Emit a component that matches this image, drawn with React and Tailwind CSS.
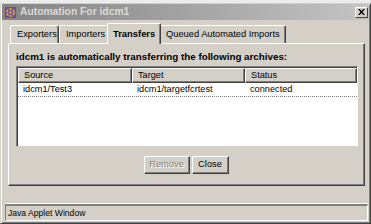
import React from "react";

const F = { fontFamily: '"Liberation Sans", Arial, sans-serif' };

function Tab({ label, active, w }) {
  if (active) {
    return (
      <div className={`relative z-10 -mx-[2px] ${w} h-[21px] -mb-[1px] pl-[5px] flex items-center bg-[#d4d0c8] border-t border-l border-white border-r border-r-[#404040] rounded-t-[2px] shadow-[inset_-1px_0_0_#808080] text-[9.4px] font-bold text-black`}>
        {label}
      </div>
    );
  }
  return (
    <div className={`${w} h-[18px] pl-[6px] pt-[1px] flex items-center bg-[#d4d0c8] border-t border-l border-white border-r border-r-[#404040] rounded-t-[2px] shadow-[inset_-1px_0_0_#808080] text-[9.3px] text-black`}>
      {label}
    </div>
  );
}

const raised =
  "border-t border-l border-white border-r border-b border-r-[#404040] border-b-[#404040] shadow-[inset_-1px_-1px_0_#808080]";

export default function App() {
  return (
    <div className="w-[371px] h-[224px] bg-white overflow-hidden" style={F}>
      <div className="h-[3px] bg-[#ececec]" />
      <div className="h-[221px] bg-[#d4d0c8] border-t border-l border-[#d4d0c8] border-r border-b border-r-[#404040] border-b-[#404040] shadow-[inset_1px_1px_0_#ffffff,inset_-1px_-1px_0_#808080] px-[1px] pb-[2px] flex flex-col">
        {/* title bar */}
        <div className="h-[16px] shrink-0 flex items-center bg-gradient-to-r from-[#848484] to-[#c4c4c4] pl-[3px] pr-[1px]">
          <svg width="11" height="11" viewBox="0 0 14 14" className="shrink-0">
            <rect x="0" y="0" width="14" height="14" fill="#6a4fa0" />
            <circle cx="7" cy="7" r="4.5" fill="none" stroke="#e8a020" strokeWidth="2.4" strokeDasharray="3.2 1.6" />
            <circle cx="7" cy="7" r="1.4" fill="#f0d060" />
          </svg>
          <span className="ml-[4px] text-[10.3px] font-bold text-[#dcdad4]">Automation For idcm1</span>
          <div className="ml-auto w-[13px] h-[11px] bg-[#d4d0c8] border-t border-l border-white border-r border-b border-r-[#404040] border-b-[#404040] flex items-center justify-center">
            <svg width="7" height="6" viewBox="0 0 7 6">
              <path d="M0 0h1.8l1.7 1.9L5.2 0H7L4.4 3 7 6H5.2L3.5 4.1 1.8 6H0l2.6-3z" fill="#000" />
            </svg>
          </div>
        </div>

        {/* tabs */}
        <div className="mt-[3px] h-[20px] shrink-0 flex items-end pl-[8px]">
          <Tab label="Exporters" w="w-[49px]" />
          <Tab label="Importers" w="w-[50px]" />
          <Tab label="Transfers" w="w-[54px]" active />
          <Tab label="Queued Automated Imports" w="w-[127px]" />
        </div>

        {/* panel */}
        <div className="ml-[6px] mr-[4px] h-[143px] shrink-0 border-t border-l border-white border-r border-b border-r-[#404040] border-b-[#404040] shadow-[inset_-1px_-1px_0_#808080] flex flex-col pl-[7px] pr-[6px] pt-[7px]">
          <div className="h-[12px] text-[9.8px] font-bold text-black leading-[12px]">
            idcm1 is automatically transferring the following archives:
          </div>
          <div className="mt-[3px] h-[81px] bg-white border-t border-l border-[#808080] border-r border-b border-r-white border-b-[#d4d0c8] shadow-[inset_1px_1px_0_#404040] pl-[1px] pt-[1px] flex flex-col">
            <div className="flex h-[15px] text-[9.2px] text-black">
              <div className={`w-[114px] bg-[#d4d0c8] ${raised} pl-[5px] flex items-center`}>Source</div>
              <div className={`w-[113px] bg-[#d4d0c8] ${raised} pl-[5px] flex items-center`}>Target</div>
              <div className={`flex-1 bg-[#d4d0c8] ${raised} pl-[5px] flex items-center`}>Status</div>
            </div>
            <div className="flex h-[13px] mt-[1px] text-[9.2px] text-black items-center border-b border-dotted border-[#808080]">
              <div className="w-[114px] pl-[5px]">idcm1/Test3</div>
              <div className="w-[113px] pl-[5px]">idcm1/targetfcrtest</div>
              <div className="flex-1 pl-[5px]">connected</div>
            </div>
          </div>
          <div className="flex justify-center gap-[2px] mt-[9px] pr-[2px]">
            <div className={`w-[46px] h-[18px] ${raised} flex items-center justify-center text-[9.3px] text-[#808080] [text-shadow:1px_1px_0_#ffffff]`}>
              Remove
            </div>
            <div className={`w-[37px] h-[18px] ${raised} flex items-center justify-center text-[9.3px] text-black`}>
              Close
            </div>
          </div>
        </div>

        {/* status bar */}
        <div className="mt-[18px] ml-[3px] mr-[1px] h-[17px] shrink-0 border-t-2 border-t-[#808080] border-l border-l-[#808080] border-r border-r-white border-b border-b-white shadow-[0_-1px_0_#ffffff] flex items-center pl-[2px] text-[8.6px] text-black">
          Java Applet Window
        </div>
      </div>
    </div>
  );
}
